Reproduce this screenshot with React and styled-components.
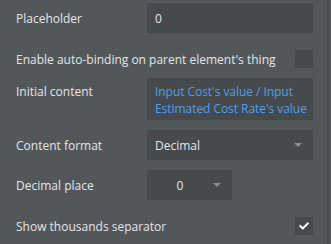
import React from "react";
import styled, { createGlobalStyle } from "styled-components";
import { FaCheck } from "react-icons/fa";

const Global = createGlobalStyle`
  html, body { margin: 0; padding: 0; background: #52575a; }
  body { font-family: "Open Sans", "Noto Sans", sans-serif; }
`;

const Panel = styled.div`
  width: 329px;
  height: 244px;
  box-sizing: border-box;
  background: #52575a;
  border-right: 2px solid #464b4e;
  padding: 3px 14px 0 16px;
  display: flex;
  flex-direction: column;
`;

const Row = styled.div`
  display: flex;
  align-items: ${(p) => (p.$top ? "flex-start" : "center")};
  margin-top: ${(p) => p.$mt || 0}px;
  min-height: ${(p) => p.$h || 30}px;
`;

const Label = styled.div`
  width: 131px;
  flex: none;
  font-size: 12px;
  color: #e4e5e6;
  line-height: 17px;
  padding-top: ${(p) => p.$pt || 0}px;
  white-space: nowrap;
`;

const Spacer = styled.div`
  flex: 1;
`;

const Field = styled.div`
  width: ${(p) => p.$w || 168}px;
  height: ${(p) => p.$h || 30}px;
  box-sizing: border-box;
  background: #464a4d;
  display: flex;
  align-items: center;
  padding: 0 8px;
  font-size: 12px;
  color: #e4e5e6;
`;

const Multi = styled.div`
  width: 168px;
  height: 42px;
  box-sizing: border-box;
  background: #464a4d;
  padding: 5px 1px 3px 8px;
  font-size: 12px;
  line-height: 17px;
  letter-spacing: -0.05px;
  color: #4f9fec;
`;

const Select = styled(Field)`
  justify-content: space-between;
  padding: 0 11px 0 8px;
`;

const Value = styled.span`
  flex: ${(p) => (p.$center ? 1 : "none")};
  text-align: ${(p) => (p.$center ? "center" : "left")};
`;

const Caret = styled.span`
  flex: none;
  width: 0;
  height: 0;
  border-left: 4px solid transparent;
  border-right: 4px solid transparent;
  border-top: 4px solid #8b8f92;
  margin-left: ${(p) => p.$ml || 0}px;
`;

const Check = styled.div`
  width: 18px;
  height: 18px;
  background: #464a4d;
  display: flex;
  align-items: center;
  justify-content: center;
  color: #ffffff;
  font-size: 10px;
`;

export default function App() {
  return (
    <>
      <Global />
      <Panel>
        <Row $h={30}>
          <Label>Placeholder</Label>
          <Field>0</Field>
        </Row>
        <Row $mt={17} $h={18}>
          <Label>Enable auto-binding on parent element's thing</Label>
          <Spacer />
          <Check />
        </Row>
        <Row $mt={10} $top>
          <Label $pt={5}>Initial content</Label>
          <Multi>
            Input Cost's value / Input Estimated Cost Rate's value
          </Multi>
        </Row>
        <Row $mt={10} $h={30}>
          <Label>Content format</Label>
          <Select>
            <Value>Decimal</Value>
            <Caret />
          </Select>
        </Row>
        <Row $mt={10} $h={30}>
          <Label>Decimal place</Label>
          <Select $w={85}>
            <Value $center>0</Value>
            <Caret $ml={8} />
          </Select>
        </Row>
        <Row $mt={17} $h={18}>
          <Label>Show thousands separator</Label>
          <Spacer />
          <Check>
            <FaCheck />
          </Check>
        </Row>
      </Panel>
    </>
  );
}
